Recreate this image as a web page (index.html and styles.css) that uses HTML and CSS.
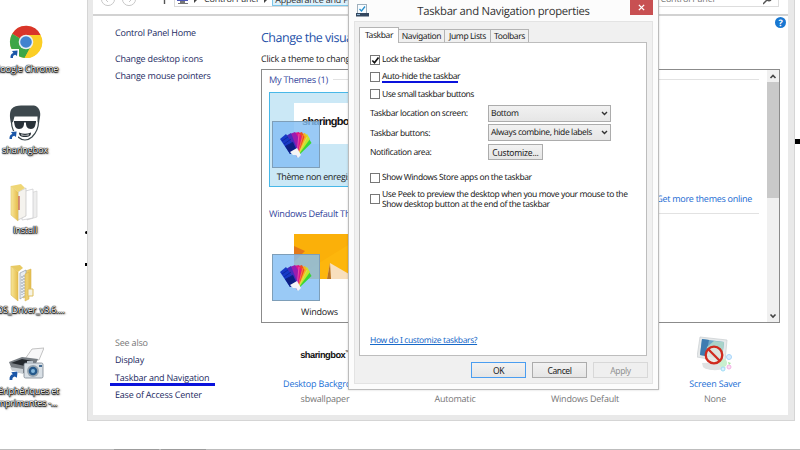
FILE: index.html
```
<!DOCTYPE html>
<html lang="en">
<head>
<meta charset="utf-8">
<title>Taskbar and Navigation properties</title>
<link rel="stylesheet" href="styles.css">
</head>
<body>
<svg width="0" height="0" class="defs">
  <defs>
    <linearGradient id="folder" x1="0" x2="1"><stop offset="0" stop-color="#f8e79a"/><stop offset="1" stop-color="#e6bd4c"/></linearGradient>
    <symbol id="shortcut" viewBox="0 0 8 8"><path d="M0.5 8 C0.2 4.8 1.6 3.2 3.4 2.9 L2 1 L7.6 0.4 L7 6 L5.2 4.8 C3.5 5.2 2.8 6.2 3 8 Z" fill="#1b57a8"/></symbol>
    <symbol id="swatches" viewBox="0 0 32 28">
      <path d="M17 26 L26 8 L28 6 L31.500 12 Z" fill="#39d636"/>
      <path d="M17 26 L24 5 L27 3 L30 8 Z" fill="#c5e52b"/>
      <path d="M17 26 L22 3 L25 2 L27 6 Z" fill="#f5b51c"/>
      <path d="M17 26 L19 2 L22 1 L24.500 6 Z" fill="#ee4a22"/>
      <path d="M17 26 L14 2 L19 1 L21.500 6 Z" fill="#e0158a"/>
      <path d="M17 26 L10 3 L15 1 L18 6 Z" fill="#9b1cae"/>
      <path d="M14 24 L6 5 L11 2 L18 20 Z" fill="#4a2bbd"/>
      <path d="M10 23 L0 8 L6 3 L17 19 Z" fill="#1739c6"/>
      <path d="M10 23 L5 15 L13 11 L17 20 Z" fill="#0c1e82"/>
      <path d="M10 21 L17 17 L21 24 L18 27 L16 24 L13 24 Z" fill="#f4f4f6"/>
      <path d="M2 10 L8 6 M4 13 L11 8 M6 16 L13 11" stroke="#0c2390" stroke-width=".7"/>
      <path d="M17 22 L19 3 M18 22 L23 4 M19 22 L27 6" stroke="#fff" stroke-width=".4" opacity=".6"/>
    </symbol>
  </defs>
</svg>
<div class="desktop">
  <div class="desk-icon chrome">
    <svg width="34" height="34" viewBox="0 0 34 34">
      <circle cx="17" cy="17" r="16" fill="#fc3"/>
      <path d="M17 17 L3.2 8.8 A16 16 0 0 1 31.6 10 L17 10 Z" fill="#d9352a"/>
      <path d="M17 17 L3.2 8.8 A16 16 0 0 0 15.6 33 L22 21 Z" fill="#3da648"/>
      <path d="M17 10 H31.6 A16 16 0 0 1 15.6 33 L23 20 Z" fill="#fbce25"/>
      <circle cx="17" cy="17" r="7.3" fill="#e9f0f4"/><circle cx="17" cy="17" r="5.8" fill="#4183cf"/>
      <rect x="1" y="24" width="9" height="9" fill="#fff"/><use href="#shortcut" x="1" y="25" width="8" height="8"/>
    </svg>
    <span class="desk-label">Google Chrome</span>
  </div>
  <div class="desk-icon box">
    <svg width="34" height="37" viewBox="0 0 34 37">
      <path d="M3 18 C2 14 1 8 3.500 4 C6 1 9 .5 13 .5 H26 C31 1.500 33 7 32 12 L31 18 L29.500 17 V11.500 H6.500 L5 17 Z" fill="#3d484d"/>
      <path d="M3.500 17 C3.500 22 5 27 10 32 Q17 38 24 32 C29 27 30.500 22 30.500 17" fill="none" stroke="#39454a" stroke-width="1.200"/>
      <path d="M6 16 H28 V17.500 H6 Z" fill="#293239"/>
      <path d="M6 16 H16 C16.500 21 15 24 11 24 C7.500 24 6.500 21 6 16 Z M18 16 H28 C27.500 21 26.500 24 23 24 C19 24 17.500 21 18 16 Z" fill="#293239"/>
      <path d="M11 27.500 Q17 30 23 27.500 C23 31 21 32 17 32 C13 32 11 31 11 27.500 Z" fill="#293239"/><path d="M13 29.300 Q17 30.500 21 29.300 L20.500 30.500 H13.500 Z" fill="#fff"/>
      <rect x="1" y="26" width="9" height="9" fill="#fff"/><use href="#shortcut" x="1" y="26" width="8" height="8"/>
    </svg>
    <span class="desk-label">sharingbox</span>
  </div>
  <div class="desk-icon install">
    <svg width="30" height="38" viewBox="0 0 30 38">
      <path d="M17 36 L27 33 V7 L17 10 Z" fill="#eee" stroke="#ccc" stroke-width=".6"/>
      <path d="M12 36 L23 34 V5 L12 8 Z" fill="#fff" stroke="#c8c8cc" stroke-width=".7"/>
      <path d="M8 36 L16 32 V4 L8 8 Z" fill="#f5f3ee" stroke="#bbb" stroke-width=".6"/>
      <path d="M1 2 L8 8 V37 L1 31 Z" fill="url(#folder)" stroke="#dec66b" stroke-width=".6"/><path d="M1 2 L11 0 L15 4 L8 8 Z" fill="#efd675"/>
      <path d="M9 12 V26" stroke="#c65332" stroke-width="1.200"/>
    </svg>
    <span class="desk-label">Install</span>
  </div>
  <div class="desk-icon driver">
    <svg width="30" height="38" viewBox="0 0 30 38">
      <path d="M13 34 L21 31 V5 L13 8 Z" fill="url(#folder)" stroke="#d9b756" stroke-width=".6"/>
      <path d="M10 35 L16 31 V6 L10 9 Z" fill="#e9edf0" stroke="#8f9baa" stroke-width=".7"/>
      <path d="M12 12 V31 M14 11 V30" stroke="#7e8b9a" stroke-width=".8" stroke-dasharray="2 1"/>
      <path d="M1 2 L8 8 V37 L1 31 Z" fill="url(#folder)" stroke="#d9b756" stroke-width=".6"/><path d="M1 2 L10 1 L13 4 L8 8 Z" fill="#e8ca62"/>
      <path d="M15 10 L19 8 V35 L15 37 Z" fill="#edce6e" stroke="#d4af47" stroke-width=".5"/><path d="M18 25 H23 V32 H18 Z" fill="#f6f3e5" stroke="#dfbf5d"/>
    </svg>
    <span class="desk-label">EOS_Driver_v3.6....</span>
  </div>
  <div class="desk-icon printers">
    <svg width="36" height="34" viewBox="0 0 36 34">
      <path d="M17 12 L24 2 L36 1 L31 13 Z" fill="#f7f7f8" stroke="#aaa" stroke-width=".7"/>
      <path d="M1 15 L14 10 L30 12 L23 27 L5 25 Z" fill="#777d83"/><path d="M3 16 L14 12 L24 14 L17 19 Z" fill="#24292e"/><path d="M2 20 L15 22 V27 L4 24 Z" fill="#c8ced3"/>
      <rect x="16" y="16" width="19" height="15" rx="1.500" fill="#d9e0e6" stroke="#7c8790" stroke-width=".8"/><rect x="19" y="14" width="6" height="3" fill="#b8c1c9"/>
      <circle cx="25" cy="24" r="6" fill="#98a5b0"/><circle cx="25" cy="24" r="4.300" fill="#25598b"/><circle cx="25" cy="24" r="2" fill="#83b7dc"/><rect x="31" y="18" width="3" height="2" fill="#456d94"/>
      <rect x="1" y="24" width="9" height="9" fill="#fff"/><use href="#shortcut" x="1" y="24" width="9" height="9"/>
    </svg>
    <span class="desk-label">Périphériques et<br>imprimantes -...</span>
  </div>
  <i class="mark m1"></i><i class="mark m2"></i><i class="mark m3"></i>

  <section class="cp-window">
    <header class="nav">
      <svg class="nav-buttons" width="80" height="15" viewBox="0 0 80 15">
        <circle cx="15" cy="-1" r="6.600" fill="#fff" stroke="#c9c9c9"/><circle cx="36" cy="-1" r="6.600" fill="#fff" stroke="#c9c9c9"/>
        <path d="M12 -1 L15 2 M12 -1 H18 M39 -1 L36 2 M33 -1 H39" stroke="#c9c9c9" fill="none"/><path d="M71.500 0 V4" stroke="#555" stroke-width="1.400"/>
      </svg>
      <div class="address">
        <svg width="14" height="6" viewBox="0 0 14 6"><path d="M1 0 H12 V1 H1 Z" fill="#4d56b8"/><path d="M4 1 H9 V3 H12 V4 H2 V3 H4 Z" fill="#777"/></svg>
        <i class="crumb-arrow"></i><span>Control Panel</span><i class="crumb-arrow"></i><span class="crumb-active">Appearance and Personalization</span>
      </div>
      <div class="search"><span>Search Control Panel</span><svg width="9" height="6" viewBox="0 0 9 6"><path d="M0 4 L4 0 Q6 1.500 8 0" stroke="#555" stroke-width="1.500" fill="none"/></svg></div>
    </header>
    <div class="cp-body">
      <nav class="side">
        <a>Control Panel Home</a>
        <a class="tasks">Change desktop icons</a>
        <a>Change mouse pointers</a>
        <div class="see-also"><span>See also</span><a>Display</a><a class="underlined">Taskbar and Navigation</a><a>Ease of Access Center</a></div>
      </nav>
      <main class="main">
        <h1>Change the visuals and sounds on your computer</h1>
        <p class="hint">Click a theme to change the desktop background, color, sounds, and screen saver all at once.</p>
        <div class="theme-box">
          <div class="themes">
            <h2 class="group">My Themes (1)</h2>
            <div class="theme selected">
              <div class="paper brand">sharingbox</div>
              <div class="tile"><svg width="32" height="28"><use href="#swatches" width="32" height="28"/></svg></div>
              <span>Thème non enregistré</span>
            </div>
            <a class="online">Get more themes online</a>
            <h2 class="group second">Windows Default Themes (3)</h2>
            <div class="theme">
              <svg class="paper" width="72" height="45" viewBox="0 0 72 45"><path d="M0 0 H72 V45 H0 Z" fill="#fdb60c"/><path d="M0 0 H72 L33 24 L0 45 Z" fill="#fbb009"/><path d="M0 12 L11 17 L0 28 Z" fill="#e37919"/><path d="M33 45 L36 29 L55 40 V45 Z" fill="#f8dfbd"/><path d="M33 45 L36 29 L37 45 Z" fill="#ba7320"/></svg>
              <div class="tile"><svg width="32" height="28"><use href="#swatches" width="32" height="28"/></svg></div>
              <span>Windows</span>
            </div>
          </div>
          <div class="scrollbar">
            <svg width="12" height="12" viewBox="0 0 12 12"><path d="M3.500 8 L6 5.500 L8.500 8" fill="none" stroke="#444" stroke-width="1.600"/></svg>
            <i class="thumb"></i>
            <svg width="12" height="11" viewBox="0 0 12 11"><path d="M3.500 3.500 L6 6 L8.500 3.500" fill="none" stroke="#444" stroke-width="1.600"/></svg>
          </div>
        </div>
        <div class="settings">
          <div class="setting"><div class="pic"><b class="brand small">sharingbox<sup>™</sup></b></div><a>Desktop Background</a><span>sbwallpaper</span></div>
          <div class="setting"><div class="pic"></div><a>Color</a><span>Automatic</span></div>
          <div class="setting"><div class="pic"></div><a>Sounds</a><span>Windows Default</span></div>
          <div class="setting"><div class="pic">
            <svg width="36" height="38" viewBox="0 0 36 38">
              <path d="M5 28 L24 27 L29 33 C23 36 10 36 6 32 Z" fill="#dfe2e3"/><path d="M3 2 L30 5 L28 27 L0 22 Z" fill="#e6e9ea" stroke="#c8cdd0" stroke-width=".7"/><path d="M5 4 L27 7 L25 24 L3 20 Z" fill="#6fa9c8"/><path d="M5 4 L12 5 L9 21 L3 20 Z" fill="#3f7cb0"/><path d="M10 12 L17 6 L27 7 L25 24 L9 21 Z" fill="#a9d3c9"/>
              <circle cx="26" cy="28" r="4" fill="#c9efcf"/><circle cx="32" cy="22" r="2.500" fill="#d7edff" stroke="#a8d6fa"/><circle cx="32" cy="32" r="2" fill="#fbdcf4" stroke="#f3b4e4"/><circle cx="26" cy="34" r="2" fill="#d8f2ff" stroke="#9edcf5"/><path d="M31 27 L34 28 L32 30 Z" fill="#a5e8a0"/>
              <circle cx="17" cy="20" r="8.300" fill="#e9e9e4" fill-opacity=".8" stroke="#d02a1e" stroke-width="2.300"/><path d="M11.300 14.300 L22.700 25.700" stroke="#d02a1e" stroke-width="2.300"/>
            </svg></div><a>Screen Saver</a><span>None</span></div>
        </div>
      </main>
      <span class="help">?</span>
    </div>
  </section>

  <section class="dialog">
    <header class="titlebar">
      <svg width="13" height="13" viewBox="0 0 13 13"><rect x="1.500" y=".5" width="9" height="9" fill="#f8fcff" stroke="#9fb0bd"/><path d="M3.500 5 L5.500 7 L9 2.500" fill="none" stroke="#268ecb" stroke-width="1.300"/><rect x="0" y="9" width="13" height="3.500" fill="#33475f"/><path d="M1 10.500 H4" stroke="#92b7d6"/></svg>
      <h1>Taskbar and Navigation properties</h1>
      <button class="close"><svg width="7" height="7" viewBox="0 0 8 8"><path d="M1 1 L7 7 M7 1 L1 7" stroke="#fff" stroke-width="1.600"/></svg></button>
    </header>
    <div class="dialog-body">
      <div class="tabs"><span class="tab active">Taskbar</span><span class="tab nav-tab">Navigation</span><span class="tab jump">Jump Lists</span><span class="tab tools">Toolbars</span></div>
      <div class="panel">
        <label class="check"><i class="cb"><svg width="9" height="9" viewBox="0 0 9 9"><path d="M1.300 4.500 L3.500 6.800 L7.500 1.500" fill="none" stroke="#111" stroke-width="1.700"/></svg></i><span class="tight">Lock the taskbar</span></label>
        <label class="check"><i class="cb"></i><span class="marked">Auto-hide the taskbar</span></label>
        <label class="check"><i class="cb"></i><span class="tight">Use small taskbar buttons</span></label>
        <div class="fields">
          <span>Taskbar location on screen:</span><div class="combo"><span>Bottom</span><svg width="7" height="5" viewBox="0 0 7 5"><path d="M1 1 L3.500 3.500 L6 1" fill="none" stroke="#333" stroke-width="1.400"/></svg></div>
          <span>Taskbar buttons:</span><div class="combo"><span>Always combine, hide labels</span><svg width="7" height="5" viewBox="0 0 7 5"><path d="M1 1 L3.500 3.500 L6 1" fill="none" stroke="#333" stroke-width="1.400"/></svg></div>
          <span>Notification area:</span><button class="btn wide">Customize...</button>
        </div>
        <label class="check"><i class="cb"></i><span>Show Windows Store apps on the taskbar</span></label>
        <label class="check peek"><i class="cb"></i><span>Use Peek to preview the desktop when you move your mouse to the<br>Show desktop button at the end of the taskbar</span></label>
        <a class="how">How do I customize taskbars?</a>
      </div>
      <footer class="actions"><button class="btn ok">OK</button><button class="btn">Cancel</button><button class="btn off">Apply</button></footer>
    </div>
  </section>
  <div class="taskbar"><i></i><i></i></div>
</div>
</body>
</html>
```
FILE: styles.css
```
* { box-sizing: border-box; }
body { margin: 0; font: 9px/12px "Open Sans", "Noto Sans", sans-serif; letter-spacing: -.2px; text-rendering: geometricPrecision; color: #222; background: #fff; }
h1, h2, p { margin: 0; font-weight: 400; }
svg { display: block; flex: none; }
.defs { position: absolute; }
.desktop { position: relative; width: 800px; height: 450px; overflow: hidden; background: #fff; }

.desk-icon { position: absolute; left: -25px; width: 102px; display: flex; flex-direction: column; align-items: center; }
.chrome { top: 25px; }
.box { top: 105px; left: -26px; }
.install { top: 184px; left: -26px; }
.driver { top: 264px; left: -26px; }
.printers { top: 347px; }
.desk-label { position: relative; margin-top: 4px; font-size: 9.2px; line-height: 12px; text-align: center; white-space: nowrap; color: #fff; text-shadow: 0 0 1px #000, 0 0 1px #000, 0 0 1px #000, 0 1px 1px #000, 1px 1px 2px #333; }
.box .desk-label, .install .desk-label, .driver .desk-label { margin-top: 2px; }
.driver .desk-label { padding-left: 6px; letter-spacing: -.3px; }
.printers .desk-label { line-height: 11.500px; letter-spacing: -.3px; }
.mark { position: absolute; background: #000; }
.m1 { left: 85px; top: 231px; width: 3px; height: 3px; border-radius: 2px; }
.m2 { left: 85px; top: 263px; width: 3px; height: 3px; }
.m3 { left: 794px; top: 139px; width: 6px; height: 5px; }

.cp-window { position: absolute; left: 87px; top: -1px; width: 708px; height: 422px; padding: 1px 6px 5px 5px; background: #e9e9e9; border: 1px solid #d5d5d5; border-top: 0; display: flex; flex-direction: column; }
.nav { height: 16px; flex: none; display: flex; align-items: flex-start; background: #fff; border-bottom: 2px solid #d2d2d2; overflow: hidden; }
.nav-buttons { width: 80px; }
.address { width: 440px; height: 7px; margin-left: 1px; display: flex; align-items: flex-end; border: 1px solid #d9d9d9; border-top: 0; color: #333; }
.address svg { margin: 0 4px 0 1px; align-self: flex-start; }
.address span { height: 13px; white-space: nowrap; }
.crumb-arrow { width: 4px; height: 4px; margin: 0 6px 3px 0; border-left: 3px solid #444; border-bottom: 3px solid transparent; }
.address span + .crumb-arrow { margin-left: 6px; margin-right: 4px; }
.address .crumb-active { width: 150px; height: 13px; padding-left: 2px; line-height: 11px; background: #def1fb; border: 1px solid #7cc6ea; }
.search { margin-left: auto; margin-right: 9px; width: 149px; height: 7px; padding: 0 6px 0 0; display: flex; justify-content: space-between; align-items: flex-end; border: 1px solid #ddd; border-top: 0; color: #777; }
.search span { height: 13px; }
.search svg { align-self: flex-start; }
.cp-body { flex: 1; min-height: 0; display: flex; background: #fff; position: relative; white-space: nowrap; }
.side { width: 168px; padding: 8px 0 0 22px; display: flex; flex-direction: column; color: #1d2b63; line-height: 17px; }
.side .tasks { margin-top: 9px; }
.see-also { margin-top: auto; padding-bottom: 12px; display: flex; flex-direction: column; line-height: 17.200px; }
.see-also span { color: #777; }
.underlined { position: relative; }
.underlined::after { content: ""; position: absolute; left: -5px; top: 14px; width: 105px; height: 3px; background: #0a12dc; }
.main { width: 519px; display: flex; flex-direction: column; }
.main h1 { padding-top: 12px; font-size: 12.500px; letter-spacing: -.5px; line-height: 20px; color: #1e50a8; overflow: hidden; }
.hint { margin-top: 4px; height: 17px; line-height: 14px; overflow: hidden; letter-spacing: -.25px; }
.theme-box { height: 254px; flex: none; display: flex; border: 1px solid #8b8b8b; }
.themes { flex: 1; padding: 3px 8px 0 7px; display: flex; flex-direction: column; overflow: hidden; }
.group { height: 13px; flex: none; display: flex; align-items: center; gap: 5px; font-size: 9.200px; letter-spacing: -.25px; color: #33459c; }
.group::after { content: ""; flex: 1; height: 1px; background: #e2e2e2; }
.theme { width: 101px; height: 95px; flex: none; position: relative; padding-top: 79px; margin-top: 6px; text-align: center; line-height: 12px; border: 1px solid transparent; }
.selected { padding-top: 78px; background: #cbe8f6; border-color: #48b8e8; letter-spacing: -.35px; }
.selected .paper { top: 10px; }
.paper { position: absolute; left: 24px; top: 7px; width: 72px; height: 41px; overflow: hidden; background: #fff; }
svg.paper { height: 45px; }
.brand { font: 700 11px/39px "Liberation Sans", sans-serif; letter-spacing: -.7px; text-align: left; padding-left: 8px; color: #111; }
.tile { position: absolute; left: 2px; top: 27px; width: 48px; height: 47px; display: grid; place-items: center; background: rgba(132,190,244,.82); border: 1px solid #7e9eb8; }
.selected .tile { top: 28px; }
.online { position: absolute; right: 36px; top: 176px; line-height: 14px; color: #1769d2; letter-spacing: -.27px; }
.second { margin-top: 20px; }
.scrollbar { width: 12px; display: flex; flex-direction: column; background: #f0f0f0; }
.thumb { height: 116px; background: #c9c9c9; }
.scrollbar svg:last-child { margin-top: auto; }
.settings { padding-top: 12px; display: flex; margin-left: -1px; }
.setting { width: 130px; display: flex; flex-direction: column; align-items: center; line-height: 15px; color: #777; }
.setting a { color: #1b6fd6; }
.pic { height: 41px; }
.brand.small { display: block; padding-left: 0; line-height: 40px; font-size: 9.300px; letter-spacing: -.5px; }
.small sup { font-size: 5px; line-height: 0; }
.help { position: absolute; left: 682px; top: 1px; width: 11px; height: 11px; border-radius: 6px; background: #1877d1; color: #fff; font-size: 9px; font-weight: 700; line-height: 11px; text-align: center; }

.dialog { position: absolute; left: 348px; top: -2px; width: 311px; height: 392px; background: #fcfcfc; border: 1px solid #bcbcbc; border-top: 0; box-shadow: 0 0 2px rgba(0,0,0,.18); padding: 2px 5px 5px; display: flex; flex-direction: column; font-family: "Noto Sans", "Open Sans", sans-serif; font-size: 8.500px; letter-spacing: -.4px; }
.titlebar { position: relative; height: 21px; flex: none; display: flex; justify-content: center; align-items: center; }
.titlebar > svg { position: absolute; left: 2px; top: 4px; }
.titlebar h1 { padding-top: 2px; font: 11.300px/20px "Open Sans", sans-serif; letter-spacing: -.28px; color: #333; white-space: nowrap; }
.close { position: absolute; right: 0; top: 0; width: 23px; height: 15px; padding: 0; display: grid; place-items: center; border: 0; background: #c85052; }
.dialog-body { flex: 1; padding: 5px 5px 5px 4px; border: 1px solid #e3e3e3; background: #f0f0f0; display: flex; flex-direction: column; }
.tabs { height: 15px; display: flex; align-items: flex-end; flex: none; }
.tab { height: 13px; border: 1px solid #b4b4b4; border-left: 0; border-bottom: 0; text-align: center; line-height: 13px; white-space: nowrap; }
.active { position: relative; width: 40px; height: 16px; margin-bottom: -1px; border-left: 1px solid #b4b4b4; background: #fff; line-height: 15px; }
.nav-tab { width: 46px; }
.jump { width: 46px; }
.tools { width: 38px; }
.panel { height: 314px; width: 288px; flex: none; padding: 8px 10px; background: #fff; border: 1px solid #bdbdbd; display: flex; flex-direction: column; white-space: nowrap; }
.check { height: 17.300px; display: flex; align-items: center; gap: 2px; flex: none; }
.check > span { padding-top: 1px; }
.cb { width: 10px; height: 10px; flex: none; display: grid; place-items: center; border: 1px solid #777; background: #fff; }
.tight { letter-spacing: -.48px; }
.marked { position: relative; }
.marked::after { content: ""; position: absolute; left: 0; top: 11px; width: 76px; height: 2px; background: #0a12dc; }
.fields { margin: 2px 0 8px; display: grid; grid-template-columns: 118px 123px; grid-auto-rows: 17px; row-gap: 2.500px; align-items: center; }
.fields > span { padding-top: 2px; }
.combo { height: 17px; display: flex; align-items: center; justify-content: space-between; padding: 0 2px; border: 1px solid #acacac; background: linear-gradient(#f1f1f1, #e6e6e6); }
.combo span { padding-top: 1px; }
.btn { width: 55px; height: 16px; padding: 0; border: 1px solid #acacac; background: linear-gradient(#f2f2f2, #e5e5e5); color: #222; font: inherit; letter-spacing: inherit; line-height: 13px; }
.wide { letter-spacing: -.2px; }
.check.peek { height: 24px; line-height: 10px; margin-top: 1px; }
.how { margin-top: auto; color: #1769c9; text-decoration: underline; }
.actions { display: flex; justify-content: flex-end; gap: 6px; padding-top: 6px; margin-right: -1px; }
.ok { border-color: #4a9df0; }
.off { color: #929292; border-color: #d8d8d8; background: #efefef; }
.taskbar { position: absolute; left: 0; top: 449px; width: 800px; height: 1px; background: #bdbdbd; display: flex; gap: 2px; padding-left: 114px; }
.taskbar i { width: 45px; background: #9c9c9c; }
```
